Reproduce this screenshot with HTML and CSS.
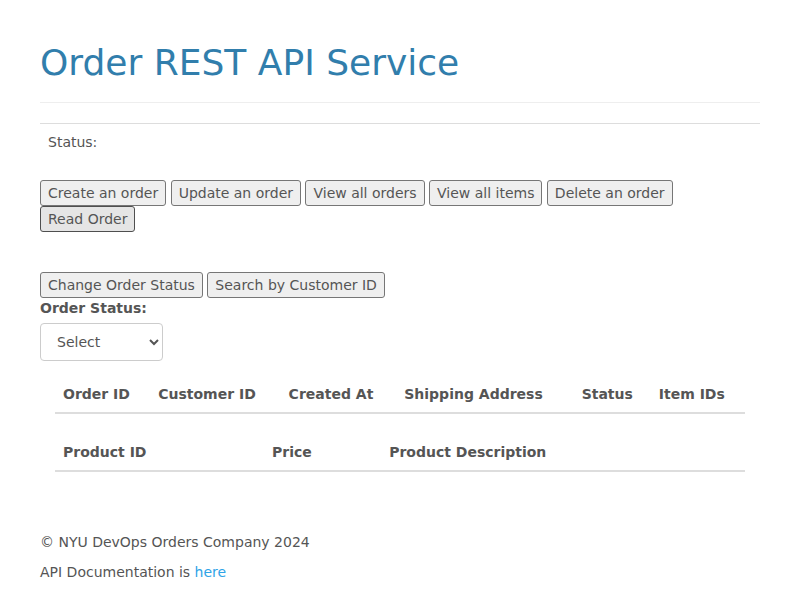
FILE: index.html
```html
<!DOCTYPE html>
<html>
<head>
<meta charset="utf-8">
<title>Order REST API Service</title>
<link rel="stylesheet" href="styles.css">
</head>
<body>
<div class="container">
  <div class="page-header">
    <h1>Order REST API Service</h1>
  </div>
  <table class="table status-table">
    <tbody><tr><td>Status:</td></tr></tbody>
  </table>
  <div class="btn-row">
    <button>Create an order</button>
    <button>Update an order</button>
    <button>View all orders</button>
    <button>View all items</button>
    <button>Delete an order</button>
    <button class="active">Read Order</button>
  </div>
  <div class="btn-row second">
    <button>Change Order Status</button>
    <button>Search by Customer ID</button>
  </div>
  <div class="form-group">
    <label class="label">Order Status:</label>
    <div class="select-wrap">
      <select class="form-control"><option>Select</option></select>
    </div>
  </div>
  <div class="col">
    <table class="table">
      <thead>
        <tr><th>Order ID</th><th>Customer ID</th><th>Created At</th><th>Shipping Address</th><th>Status</th><th>Item IDs</th></tr>
      </thead>
      <tbody></tbody>
    </table>
    <table class="table">
      <thead>
        <tr><th>Product ID</th><th>Price</th><th>Product Description</th></tr>
      </thead>
      <tbody></tbody>
    </table>
  </div>
  <hr class="footer-hr">
  <footer>
    <p>&copy; NYU DevOps Orders Company 2024</p>
    <p>API Documentation is <a href="#">here</a></p>
  </footer>
</div>
</body>
</html>
```
FILE: styles.css
```css
* { box-sizing: border-box; }
html, body {
  margin: 0;
  padding: 0;
  background: #fff;
}
body {
  font-family: "DejaVu Sans", sans-serif;
  font-size: 14px;
  line-height: 1.42857143;
  color: #555555;
}
.container {
  width: 750px;
  padding: 0 15px;
  margin: 0 auto;
}
.page-header {
  margin: 43px 0 20px;
  padding-bottom: 9px;
  border-bottom: 1px solid #eeeeee;
}
h1 {
  margin: 20px 0 10px;
  font-size: 36px;
  font-weight: 500;
  line-height: 1.1;
  color: #317eac;
}
.table {
  width: 100%;
  border-collapse: collapse;
  border-spacing: 0;
  margin-bottom: 20px;
}
.table td, .table th {
  padding: 8px;
  line-height: 20px;
  text-align: left;
  vertical-align: bottom;
}
.status-table td {
  border-top: 1px solid #dddddd;
  vertical-align: top;
}
.table th {
  font-weight: bold;
  border-bottom: 2px solid #dddddd;
}
.btn-row {
  display: flex;
  flex-wrap: wrap;
  column-gap: 4.45px;
}
.btn-row.second {
  margin-top: 40px;
}
button {
  font-family: inherit;
  font-size: 14px;
  line-height: 20px;
  color: #555555;
  background: #efefef;
  border: 1px solid #767676;
  border-radius: 3px;
  padding: 2px 7px;
  margin: 0;
}
button.active {
  background: #e5e5e5;
  border-color: #4f4f4f;
}
.label {
  display: inline-block;
  margin-bottom: 5px;
  font-weight: bold;
}
.form-group {
  margin-bottom: 15px;
}
.form-control {
  display: block;
  width: 123px;
  height: 38px;
  padding: 8px 12px;
  font-family: inherit;
  font-size: 14px;
  line-height: 20px;
  color: #555555;
  background: #fff;
  border: 1px solid #cccccc;
  border-radius: 4px;
}
.col {
  display: flow-root;
  padding: 0 15px;
}
.footer-hr {
  margin: 20px 0;
  height: 0;
  border: 0;
}
footer p {
  margin: 0 0 10px;
}
a {
  color: #2fa4e7;
  text-decoration: none;
}
```
